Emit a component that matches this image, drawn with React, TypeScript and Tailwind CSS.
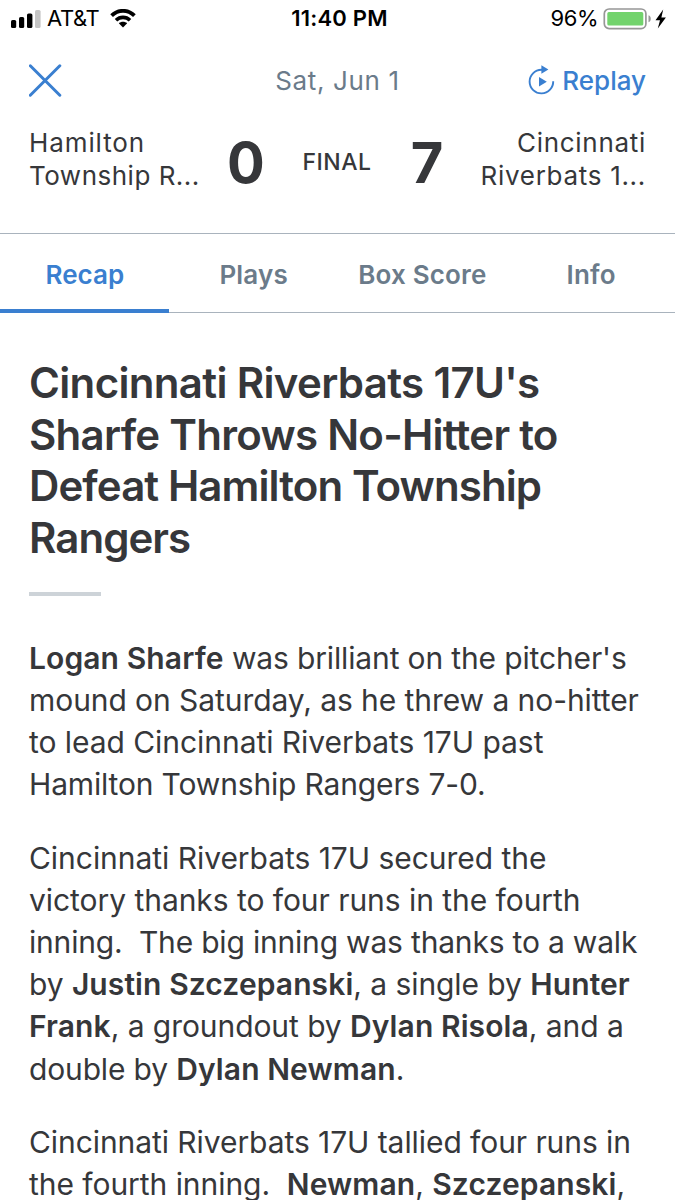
import React from "react";

function Line({ className = "", children }: { className?: string; children: React.ReactNode }) {
  return <span className={`block whitespace-pre ${className}`}>{children}</span>;
}

function B({ children }: { children: React.ReactNode }) {
  return <b className="font-semibold tracking-[0.1px]">{children}</b>;
}

function StatusBar() {
  return (
    <header className="grid h-[37px] grid-cols-[1fr_auto_1fr] items-center pr-[9px] pl-[10px] text-[22px] text-black">
      <div className="flex items-center">
        <svg width="31" height="18" viewBox="0 0 31 18">
          <rect x="1" y="10" width="5.2" height="8" rx="1.6" />
          <rect x="9" y="7" width="5.2" height="11" rx="1.6" />
          <rect x="17" y="3.5" width="5.4" height="14.5" rx="1.6" />
          <rect x="25" y="0" width="5.6" height="18" rx="1.6" fill="#c5c5c5" />
        </svg>
        <span className="ml-[6px] w-[63px] tracking-[-0.4px]">AT&amp;T</span>
        <svg width="26" height="19" viewBox="0 0 26 19" fill="none" stroke="black">
          <path d="M1.6 6.6C8 0.2 18 0.2 24.4 6.6" strokeWidth="3.8" />
          <path d="M6 11.2C10 7.4 16 7.4 20 11.2" strokeWidth="3.6" />
          <path d="M13 18.4L8.8 14.3C11.2 12.3 14.8 12.3 17.2 14.3Z" fill="black" stroke="none" />
        </svg>
      </div>
      <span className="pl-[3px] font-semibold tracking-[0.2px]">11:40 PM</span>
      <div className="flex items-center justify-end">
        <span className="tracking-[-0.5px]">96%</span>
        <svg className="ml-[5px]" width="63" height="22" viewBox="0 0 63 22">
          <rect x="1.3" y="1" width="41.6" height="19.6" rx="4.8" fill="white" stroke="#979797" strokeWidth="1.7" />
          <rect x="4.3" y="4.1" width="36" height="13.4" rx="1.6" fill="#72d36c" />
          <path d="M45.5 7.3C48.5 8.2 48.5 13.4 45.5 14.3Z" fill="#979797" />
          <path d="M60.2 1.5L52.5 12.2H57L54.8 20.5L62.9 9.6H58.4Z" fill="black" />
        </svg>
      </div>
    </header>
  );
}

function TitleBar() {
  return (
    <div className="grid h-[85px] grid-cols-[1fr_auto_1fr] items-center px-[29px] pt-px text-[26px]">
      <svg width="33" height="33" viewBox="0 0 33 33" fill="none" stroke="#3a7fd0" strokeWidth="3" strokeLinecap="round">
        <path d="M1.3 1.8L30.8 31.2M30.8 1.8L1.3 31.2" />
      </svg>
      <span className="tracking-[0.65px] text-[#6b7b8a]">Sat, Jun 1</span>
      <div className="flex items-center justify-end text-[#3a7fd0]">
        <svg className="mr-[7px]" width="27" height="30" viewBox="0 0 27 30" fill="none">
          <path d="M25.2 16.2A11.8 11.8 0 1 1 13.4 4.8H14.5" stroke="#3a7fd0" strokeWidth="1.9" />
          <path d="M13.4 0.3L20.4 4.6L13.4 8.8Z" fill="#3a7fd0" />
          <path d="M11 12L18.8 16.7L11 21.4Z" fill="#3a7fd0" />
        </svg>
        <span className="font-medium">Replay</span>
      </div>
    </div>
  );
}

function Score() {
  return (
    <section className="flex h-[111px] justify-between px-[29px] text-[26px] leading-[33px]">
      <div className="w-[188px] pt-[4px]">
        <Line className="tracking-[0.9px]">Hamilton</Line>
        <Line className="tracking-[0.5px]">Township R...</Line>
      </div>
      <div className="flex h-[83px] items-center">
        <span className="w-[54px] text-center text-[56px] font-bold">0</span>
        <span className="w-[128px] pb-[2px] text-center text-[23px] font-medium tracking-[0.45px]">FINAL</span>
        <span className="w-[52px] text-center text-[56px] font-bold">7</span>
      </div>
      <div className="w-[191px] pt-[4px] text-right">
        <Line className="tracking-[0.7px]">Cincinnati</Line>
        <Line className="tracking-[0.7px]">Riverbats 1...</Line>
      </div>
    </section>
  );
}

function Tabs() {
  const tabs = ["Recap", "Plays", "Box Score", "Info"];
  return (
    <nav className="grid h-[80px] grid-cols-4 border-y border-[#a9b3bd] text-[26px] font-semibold">
      {tabs.map((t, i) => (
        <div
          key={t}
          className={
            i === 0
              ? "-mb-px flex items-center justify-center border-b-[4px] border-[#3a7fd0] pt-[6px] pl-px text-[#3a7fd0]"
              : "flex items-center justify-center pt-[3px] pl-px tracking-[0.15px] text-[#6b7b8a]"
          }
        >
          {t}
        </div>
      ))}
    </nav>
  );
}

export default function App() {
  return (
    <div className="h-[1200px] w-[675px] overflow-hidden bg-white font-['Inter',sans-serif] text-[#36373a]">
      <StatusBar />
      <TitleBar />
      <Score />
      <Tabs />
      <main className="px-[29px] pt-[44px]">
        <h1 className="text-[42px] leading-[51.7px] font-semibold">
          <Line className="tracking-[-0.66px]">Cincinnati Riverbats 17U's</Line>
          <Line className="tracking-[-0.73px]">Sharfe Throws No-Hitter to</Line>
          <Line className="tracking-[-0.9px]">Defeat Hamilton Township</Line>
          <Line className="tracking-[-0.95px]">Rangers</Line>
        </h1>
        <div className="mt-[28px] h-[4px] w-[72px] bg-[#cdd3d8]" />
        <article className="mt-[41px] text-[30px] leading-[42.2px] tracking-[-0.07px]">
          <p>
            <Line className="tracking-[-0.14px]"><B>Logan Sharfe</B> was brilliant on the pitcher's</Line>
            <Line>mound on Saturday, as he threw a no-hitter</Line>
            <Line className="tracking-[-0.05px]">to lead Cincinnati Riverbats 17U past</Line>
            <Line className="tracking-[-0.16px]">Hamilton Township Rangers 7-0.</Line>
          </p>
          <p className="mt-[31px]">
            <Line className="tracking-[-0.04px]">Cincinnati Riverbats 17U secured the</Line>
            <Line className="tracking-[-0.05px]">victory thanks to four runs in the fourth</Line>
            <Line className="tracking-[-0.19px]">inning.  The big inning was thanks to a walk</Line>
            <Line>by <B>Justin Szczepanski</B>, a single by <B>Hunter</B></Line>
            <Line><B>Frank</B>, a groundout by <B>Dylan Risola</B>, and a</Line>
            <Line className="tracking-[-0.15px]">double by <B>Dylan Newman</B>.</Line>
          </p>
          <p className="mt-[31px]">
            <Line>Cincinnati Riverbats 17U tallied four runs in</Line>
            <Line className="tracking-[-0.05px]">the fourth inning.  <B>Newman</B>, <B>Szczepanski</B>,</Line>
          </p>
        </article>
      </main>
    </div>
  );
}
